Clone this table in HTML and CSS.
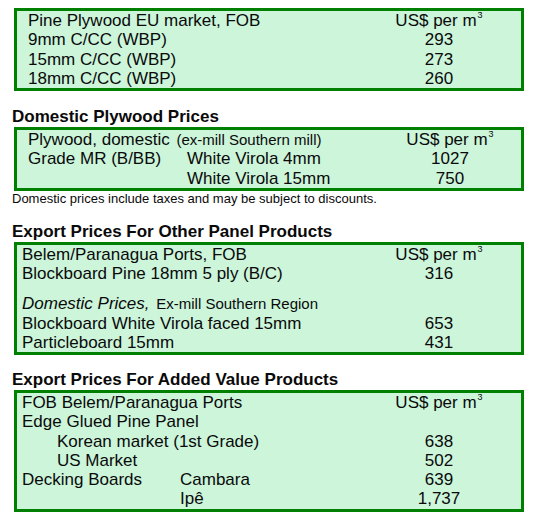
FILE: index.html
```html
<!DOCTYPE html>
<html>
<head>
<meta charset="utf-8">
<link rel="stylesheet" href="styles.css">
</head>
<body>
<div class="page">
  <div class="box b1">
    <div class="row"><span class="lbl">Pine Plywood EU market, FOB</span><span class="val">US$ per m<sup>3</sup></span></div>
    <div class="row"><span class="lbl">9mm C/CC (WBP)</span><span class="val">293</span></div>
    <div class="row"><span class="lbl">15mm C/CC (WBP)</span><span class="val">273</span></div>
    <div class="row"><span class="lbl">18mm C/CC (WBP)</span><span class="val">260</span></div>
  </div>

  <h2 class="heading h2">Domestic Plywood Prices</h2>
  <div class="box b2">
    <div class="row"><span class="lbl">Plywood, domestic <span class="small">(ex-mill Southern mill)</span></span><span class="val">US$ per m<sup>3</sup></span></div>
    <div class="row"><span class="lbl1">Grade MR (B/BB)</span><span class="lbl">White Virola 4mm</span><span class="val">1027</span></div>
    <div class="row"><span class="lbl1"></span><span class="lbl">White Virola 15mm</span><span class="val">750</span></div>
  </div>
  <p class="note">Domestic prices include taxes and may be subject to discounts.</p>

  <h2 class="heading h3">Export Prices For Other Panel Products</h2>
  <div class="box b3">
    <div class="row"><span class="lbl">Belem/Paranagua Ports, FOB</span><span class="val">US$ per m<sup>3</sup></span></div>
    <div class="row"><span class="lbl">Blockboard Pine 18mm 5 ply (B/C)</span><span class="val">316</span></div>
    <div class="row gap"><span class="lbl"><em>Domestic Prices,</em> <span class="small">Ex-mill Southern Region</span></span><span class="val"></span></div>
    <div class="row"><span class="lbl">Blockboard White Virola faced 15mm</span><span class="val">653</span></div>
    <div class="row"><span class="lbl">Particleboard 15mm</span><span class="val">431</span></div>
  </div>

  <h2 class="heading h4">Export Prices For Added Value Products</h2>
  <div class="box b4">
    <div class="row"><span class="lbl">FOB Belem/Paranagua Ports</span><span class="val">US$ per m<sup>3</sup></span></div>
    <div class="row"><span class="lbl">Edge Glued Pine Panel</span><span class="val"></span></div>
    <div class="row"><span class="lbl indent">Korean market (1st Grade)</span><span class="val">638</span></div>
    <div class="row"><span class="lbl indent">US Market</span><span class="val">502</span></div>
    <div class="row"><span class="lbl1">Decking Boards</span><span class="lbl">Cambara</span><span class="val">639</span></div>
    <div class="row"><span class="lbl1"></span><span class="lbl">Ipê</span><span class="val">1,737</span></div>
  </div>
</div>
</body>
</html>
```

FILE: styles.css
```css
body {
  margin: 0;
  background: #ffffff;
  color: #0a0a0a;
  font-family: "Liberation Sans", Arial, sans-serif;
}

.page {
  padding: 8px 0 0 12px;
}

.box {
  box-sizing: border-box;
  width: 510px;
  margin-left: 2px;
  border: 3px solid #008000;
  background: #ccf5da;
}

.row {
  display: flex;
  height: 19.25px;
  line-height: 19.25px;
  font-size: 17px;
  white-space: nowrap;
}

.row.gap {
  margin-top: 11px;
}

.lbl {
  flex: 1;
}

.lbl1 {
  flex: none;
  width: 159px;
}

.b4 .lbl1 {
  width: 158px;
}

.indent {
  padding-left: 35px;
}

.val {
  flex: none;
  width: 110px;
  text-align: center;
}

.val sup {
  font-size: 9px;
  line-height: 0;
  vertical-align: 8px;
  margin-left: 1px;
}

.small {
  font-size: 15px;
  margin-left: 2px;
}

.b1 {
  padding: 0 27px 0 11px;
}

.b2 {
  padding: 0 16px 0 11px;
}

.b3,
.b4 {
  padding: 0 27px 0 5px;
}

.heading {
  margin: 16px 0 0;
  font-size: 17px;
  line-height: 20px;
  font-weight: bold;
}

.h3 {
  margin-top: 16px;
}

.h4 {
  margin-top: 15px;
}

.note {
  margin: 0;
  font-size: 13px;
  line-height: 15px;
}
```
